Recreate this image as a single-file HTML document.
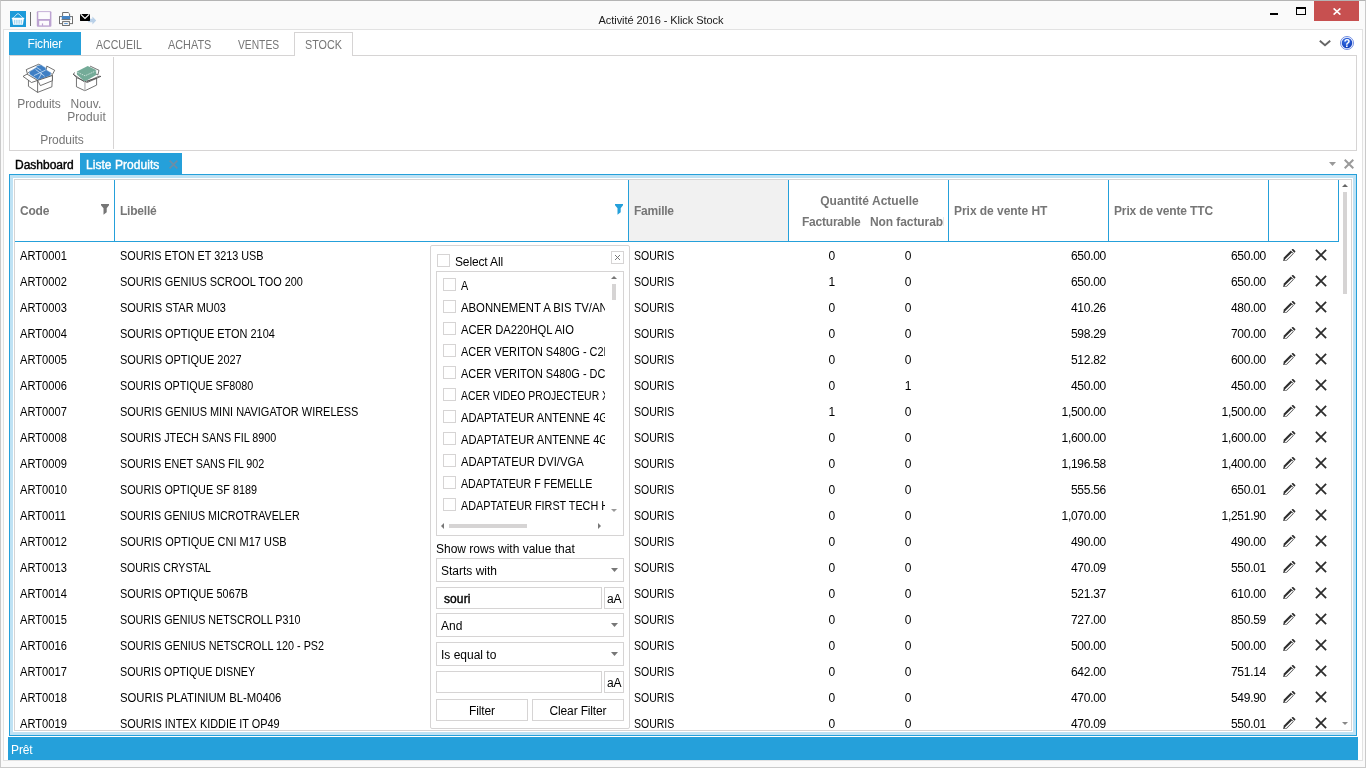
<!DOCTYPE html>
<html><head><meta charset="utf-8"><title>Klick Stock</title>
<style>
*{box-sizing:border-box;margin:0;padding:0}
html,body{width:1366px;height:768px;overflow:hidden;background:#fafafa}
body{font-family:"Liberation Sans",sans-serif;font-size:12px;color:#000;position:relative}
.abs,div,span,svg,i{position:absolute}
.t{white-space:nowrap;line-height:16px;height:16px}
#wrap{left:0;top:0;width:1366px;height:768px;will-change:transform}
/* window */
#win{left:0;top:0;width:1366px;height:768px;border:1px solid #cacaca;border-top-color:#b4b4b4;background:#fafafa}
#client{left:3px;top:29px;width:1360px;height:732px;border:1px solid #e2e2e2;background:#fff}
/* title */
#title{left:598px;top:12px;width:126px;text-align:center;font-size:11px;letter-spacing:-0.06px;color:#1a1a1a}
/* ribbon */
#tabline{left:9px;top:55px;width:1348px;height:1px;background:#d6d4d4}
#rbox{left:9px;top:55px;width:1348px;height:96px;border:1px solid #d6d4d4;background:#fff}
#fichier{left:9px;top:32px;width:72px;height:23px;background:#25a0da}
.rt{top:37px;font-size:12px;color:#767676;transform:scaleX(.9);transform-origin:0 50%}
#stocktab{left:294px;top:32px;width:59px;height:24px;border:1px solid #d6d4d4;border-bottom:none;background:#fff}
#gsep{left:113px;top:57px;width:1px;height:92px;background:#d6d4d4}
.rl{font-size:12px;color:#767676;letter-spacing:-0.05px;text-align:center}
/* doc tabs */
#ltab{left:80px;top:153px;width:102px;height:21px;background:#25a0da}
/* panel */
#panel{left:9px;top:174px;width:1348px;height:562px;border:1px solid #25a0da;background:#bfe2f4}
#pinner{left:13px;top:178px;width:1340px;height:554px;background:#fff}
#grid{left:14px;top:179px;width:1338px;height:552px;border:1px solid #d6d4d4;background:#fff;overflow:hidden}
/* header */
.hsep{top:180px;width:1px;height:61px;background:#25a0da}
#hline{left:15px;top:241px;width:1324px;height:1px;background:#25a0da}
.h{font-weight:bold;color:#767676;font-size:12px;letter-spacing:-0.22px}
/* rows */
.row{left:15px;width:1324px;height:26px}
.c{top:6px;line-height:16px;height:16px;white-space:nowrap;font-size:12px}
.code,.lib,.fam{transform:scaleX(.912);transform-origin:0 50%}
.fam{transform:scaleX(.875)}
.code{transform:scaleX(.928)}
.q1,.q2,.ht,.ttc{letter-spacing:-0.28px}
.code{left:5px}.lib{left:105px}.fam{left:619px}
.q1{left:776.6px;width:80px;text-align:center}
.q2{left:853px;width:80px;text-align:center}
.ht{right:233px;text-align:right}
.ttc{right:73px;text-align:right}
.pen{left:1267.6px;top:7px;width:12.5px;height:12.5px;overflow:visible}
.del{left:1300px;top:7px;width:12px;height:12px}
/* status */
#status{left:8px;top:737px;width:1350px;height:23px;background:#25a0da}
/* popup */
#pop{left:430px;top:245px;width:200px;height:484px;border:1px solid #d6d4d4;border-radius:2px;background:#fff}
#lbox{left:436px;top:271px;width:188px;height:265px;border:1px solid #d6d4d4;background:#fff;overflow:hidden}
.cb{width:13px;height:13px;border:1px solid #d6d4d4;background:#fff}
.li{left:436px;width:169px;height:22px;overflow:hidden}
.li .cb{left:7px;top:4px}
.li span{left:25px;top:4px;line-height:16px;white-space:nowrap;font-size:12px;transform:scaleX(.9);transform-origin:0 50%}
.box{border:1px solid #d6d4d4;background:#fff}
.pt{font-size:12px;letter-spacing:0;white-space:nowrap;line-height:16px}
</style></head><body>
<div id="wrap">
<div id="win"></div>
<div id="client"></div>

<!-- title bar icons -->
<svg style="left:10px;top:11px;width:16px;height:16px" viewBox="0 0 16 16"><rect width="16" height="16" fill="#1c9ad9"/><path d="M3.2 7 L7.1 3 Q8 2.2 8.9 3 L12.8 7" stroke="#cfeaf8" stroke-width="0.9" fill="none"/><path d="M1.8 6.8 H14.2 V8 H13.8 L12.9 13.8 H3.1 L2.2 8 H1.8 Z" fill="#fff"/><path d="M4.4 8.8 V12.8 M6.2 8.8 V12.8 M8 8.8 V12.8 M9.8 8.8 V12.8 M11.6 8.8 V12.8" stroke="#7cc4ea" stroke-width="0.8"/></svg>
<div style="left:30px;top:12px;width:1px;height:14px;background:#6c6c6c"></div>
<svg style="left:36px;top:11px;width:16px;height:16px" viewBox="0 0 16 16"><rect x="0.8" y="0.3" width="14.6" height="15.4" rx="1" fill="#bca3d1"/><rect x="2.3" y="1.1" width="11.6" height="6.9" fill="#fcfbfd"/><rect x="3.2" y="9.8" width="9.8" height="4.6" fill="#fcfbfd"/><rect x="5.9" y="12.4" width="1.2" height="2.4" fill="#bca3d1"/></svg>
<svg style="left:59px;top:12px;width:14px;height:14px" viewBox="0 0 14 14"><path d="M3.6 4.4 V0.5 H9.2 L10.6 1.9 V4.4" fill="#fff" stroke="#6e6e6e"/><rect x="0.5" y="4.6" width="13" height="7" fill="#fff" stroke="#6e6e6e"/><rect x="2.8" y="4" width="8.4" height="3.4" fill="#4585c5"/><path d="M2.6 7.6 H11.4" stroke="#6e6e6e"/><rect x="3.6" y="9.6" width="6.8" height="3.9" fill="#fff" stroke="#6e6e6e"/><path d="M5.2 11.6 H8.8" stroke="#3f82c6" stroke-width="0.9"/></svg>
<svg style="left:80px;top:13px;width:18px;height:12px" viewBox="0 0 18 12"><path d="M8.2 5.8 H12.4 V3.6 L16.2 7.5 L12.4 11.4 V9.2 H8.2 Z" fill="#b9d0e8"/><rect x="0" y="1" width="10" height="7" rx="0.4" fill="#000"/><path d="M0.8 1.4 L5 5.4 L9.2 1.4" stroke="#fff" stroke-width="1.25" fill="none"/></svg>
<div id="title" class="t">Activité 2016 - Klick Stock</div>

<!-- window controls -->
<div style="left:1270px;top:13px;width:8px;height:2px;background:#000"></div>
<div style="left:1296px;top:7px;width:10px;height:8px;border:1px solid #000;border-top-width:2px"></div>
<div style="left:1314px;top:1px;width:45px;height:20px;background:#c75050"></div>
<svg style="left:1333px;top:8px;width:8px;height:7px" viewBox="0 0 8 7"><path d="M0.6 0.4 L7.4 6.6 M7.4 0.4 L0.6 6.6" stroke="#fff" stroke-width="1.6"/></svg>

<!-- ribbon -->
<div id="rbox"></div>
<div id="fichier"></div>
<div class="t" style="left:27.5px;top:36px;font-size:12px;color:#fff;letter-spacing:-0.2px">Fichier</div>
<div id="stocktab"></div>
<div class="t rt" style="left:96px;transform:scaleX(.88)">ACCUEIL</div>
<div class="t rt" style="left:168px;transform:scaleX(.907)">ACHATS</div>
<div class="t rt" style="left:238px;transform:scaleX(.856)">VENTES</div>
<div class="t rt" style="left:304.5px">STOCK</div>
<svg style="left:1319px;top:40px;width:12px;height:7px" viewBox="0 0 12 7"><path d="M0.8 0.7 L6 5.3 L11.2 0.7" stroke="#666" stroke-width="1.9" fill="none"/></svg>
<svg style="left:1340px;top:36px;width:14px;height:14px" viewBox="0 0 15 15"><defs><radialGradient id="hg" cx="0.4" cy="0.3" r="0.8"><stop offset="0" stop-color="#3b73e8"/><stop offset="1" stop-color="#0c38b4"/></radialGradient></defs><circle cx="7.5" cy="7.5" r="7" fill="#f2f5ff" stroke="#5f7fdc" stroke-width="0.9"/><circle cx="7.5" cy="7.5" r="5.6" fill="url(#hg)"/><text x="7.5" y="11.3" font-family="Liberation Sans" font-weight="bold" font-size="11.5" fill="#fff" text-anchor="middle">?</text></svg>

<!-- ribbon buttons -->
<svg style="left:22px;top:63px;width:34px;height:31px" viewBox="22 63 34 31"><g fill="#fff" stroke="#444" stroke-width="0.75" stroke-linejoin="round"><path d="M27.3 73.6 L26.3 69.6 L38.8 64.2 L42 66 L29.5 71.8 Z"/><path d="M46.8 66.1 L54.7 70.3 L52.4 74.5 L46.3 70.5 Z"/><path d="M28.45 80.4 V86.3 L37.6 92.4 L51.9 86.8 L52.4 75.5 L37.6 80.4 Z"/><path d="M37.6 80.4 V92.4" fill="none"/></g><path d="M29.2 72 L36.2 67.6 L37 65.7 L41 64.9 L45.6 67.7 L46.3 70 L51 72.7 L50.5 75.6 L38.3 80.1 L29.6 74.3 Z" fill="#3f7fc4" stroke="#a9c8ea" stroke-width="0.5"/><path d="M35.5 69.4 L44.6 76.2 M45.6 70.1 L33.9 75.6 M36.6 67.4 L41.2 70.4 M41.8 72.9 L38.6 78.6" stroke="#cfe1f4" stroke-width="0.8" fill="none"/><g fill="#fff" stroke="#444" stroke-width="0.75" stroke-linejoin="round"><path d="M23.05 76.4 L27 74.1 L37.6 80.4 L31.5 82.5 Z"/><path d="M37.6 80.4 L40.4 85.6 L52.4 80.7 L52.4 75.5 Z"/></g></svg>
<svg style="left:72px;top:65px;width:30px;height:27px" viewBox="72 65 30 27"><g fill="#fff" stroke="#444" stroke-width="0.75" stroke-linejoin="round"><path d="M90.1 66.1 L99 70.3 L97.8 75 L88 70"/><path d="M76.45 77.6 V86.76 L84.9 90.75 L96.6 85.1 V78.3 L84.9 81.4 Z"/></g><rect x="84" y="81.8" width="1.8" height="8.6" fill="#cdcdcd"/><path d="M76.9 71.5 L87.7 66.1 L96.2 70.1 V75 L85.8 81.1 L84 81.1 L76.9 74.6 Z" fill="#74ab98"/><path d="M77.4 72.3 L85.1 75.8 L95.6 71" stroke="#e4f1ec" stroke-width="0.75" fill="none" stroke-dasharray="1.5 0.9"/><g fill="none" stroke="#444" stroke-width="0.75" stroke-linejoin="round"><path d="M76.45 77.6 L73.2 74.1 L75 72.5 M73.2 74.1 L84 81.6 M84.9 81.4 L87.25 82.5 L100.9 76.4 L99 76.2 L86.8 81.8"/></g></svg>
<div class="t rl" style="left:9px;top:96px;width:60px">Produits</div>
<div class="t rl" style="left:56px;top:96px;width:60px;letter-spacing:0.1px">Nouv.</div>
<div class="t rl" style="left:56.5px;top:109px;width:60px;letter-spacing:0.1px">Produit</div>
<div class="t rl" style="left:32px;top:132px;width:60px">Produits</div>
<div id="gsep"></div>

<!-- document tabs -->
<div class="t" style="left:15px;top:157px;font-size:12px;letter-spacing:0px;color:#000;-webkit-text-stroke:0.4px #000">Dashboard</div>
<div id="ltab"></div>
<div class="t" style="left:86px;top:157px;font-size:12px;color:#fff;letter-spacing:0.05px;-webkit-text-stroke:0.4px #fff">Liste Produits</div>
<svg style="left:169px;top:160px;width:9px;height:9px" viewBox="0 0 9 9"><path d="M0.6 0.6 L8.4 8.4 M8.4 0.6 L0.6 8.4" stroke="#6b8ea6" stroke-width="1.8"/></svg>
<svg style="left:1329px;top:162px;width:7px;height:4px" viewBox="0 0 7 4"><path d="M0 0 H7 L3.5 4 Z" fill="#999"/></svg>
<svg style="left:1344px;top:159px;width:10px;height:10px" viewBox="0 0 10 10"><path d="M0.7 0.7 L9.3 9.3 M9.3 0.7 L0.7 9.3" stroke="#9a9a9a" stroke-width="2"/></svg>

<!-- panel + grid -->
<div id="panel"></div><div id="pinner"></div><div id="grid"></div>
<div style="left:629px;top:180px;width:159px;height:61px;background:#f1f1f1"></div>
<div class="hsep" style="left:114px"></div><div class="hsep" style="left:628px"></div><div class="hsep" style="left:788px"></div><div class="hsep" style="left:948px"></div><div class="hsep" style="left:1108px"></div><div class="hsep" style="left:1268px"></div><div class="hsep" style="left:1338px"></div>
<div id="hline"></div>
<div class="t h" style="left:20px;top:203px">Code</div>
<div class="t h" style="left:120px;top:203px">Libellé</div>
<div class="t h" style="left:634px;top:203px">Famille</div>
<div class="t h" style="left:789px;top:193px;width:161px;text-align:center;letter-spacing:0.02px">Quantité Actuelle</div>
<div class="t h" style="left:802px;top:214px">Facturable</div>
<div class="t h" style="left:870px;top:214px;width:74px;overflow:hidden;letter-spacing:-0.08px">Non facturable</div>
<div class="t h" style="left:954px;top:203px;letter-spacing:-0.04px">Prix de vente HT</div>
<div class="t h" style="left:1114px;top:203px;letter-spacing:-0.14px">Prix de vente TTC</div>
<svg style="left:101px;top:204px;width:8px;height:11px" viewBox="0 0 8 11"><path d="M0 0 H8 V1.2 L5.7 4.2 V8.2 L2.5 10.8 V4.2 L0 1.2 Z" fill="#767676"/></svg>
<svg style="left:615px;top:204px;width:8px;height:11px" viewBox="0 0 8 11"><path d="M0 0 H8 V1.2 L5.7 4.2 V8.2 L2.5 10.8 V4.2 L0 1.2 Z" fill="#25a0da"/></svg>

<div class="row" style="top:242px"><span class="c code">ART0001</span><span class="c lib" style="transform:scaleX(0.903)">SOURIS ETON ET 3213 USB</span><span class="c fam">SOURIS</span><span class="c q1">0</span><span class="c q2">0</span><span class="c ht">650.00</span><span class="c ttc">650.00</span><svg class="pen" viewBox="0 0 13 13"><path d="M0.2 12.4 L0.9 8.8 L8.1 1.6 L11.2 4.7 L4 11.9 Z" fill="#2d2d2d"/><path d="M2.4 10.5 L9.3 3.6 L10.4 4.7 L3.6 11.5 L1.3 11.9 Z" fill="#fff"/><path d="M8.9 0.9 L9.8 0 Q10.2 -0.3 10.6 0.1 L12.7 2.2 Q13.1 2.6 12.7 3 L11.8 3.9 Z" fill="#2d2d2d"/></svg><svg class="del" viewBox="0 0 12 12"><path d="M0.9 0.9 L11.1 11.1 M11.1 0.9 L0.9 11.1" stroke="#2d2d2d" stroke-width="1.8" fill="none"/></svg></div>
<div class="row" style="top:268px"><span class="c code">ART0002</span><span class="c lib" style="transform:scaleX(0.909)">SOURIS GENIUS SCROOL TOO 200</span><span class="c fam">SOURIS</span><span class="c q1">1</span><span class="c q2">0</span><span class="c ht">650.00</span><span class="c ttc">650.00</span><svg class="pen" viewBox="0 0 13 13"><path d="M0.2 12.4 L0.9 8.8 L8.1 1.6 L11.2 4.7 L4 11.9 Z" fill="#2d2d2d"/><path d="M2.4 10.5 L9.3 3.6 L10.4 4.7 L3.6 11.5 L1.3 11.9 Z" fill="#fff"/><path d="M8.9 0.9 L9.8 0 Q10.2 -0.3 10.6 0.1 L12.7 2.2 Q13.1 2.6 12.7 3 L11.8 3.9 Z" fill="#2d2d2d"/></svg><svg class="del" viewBox="0 0 12 12"><path d="M0.9 0.9 L11.1 11.1 M11.1 0.9 L0.9 11.1" stroke="#2d2d2d" stroke-width="1.8" fill="none"/></svg></div>
<div class="row" style="top:294px"><span class="c code">ART0003</span><span class="c lib" style="transform:scaleX(0.915)">SOURIS STAR MU03</span><span class="c fam">SOURIS</span><span class="c q1">0</span><span class="c q2">0</span><span class="c ht">410.26</span><span class="c ttc">480.00</span><svg class="pen" viewBox="0 0 13 13"><path d="M0.2 12.4 L0.9 8.8 L8.1 1.6 L11.2 4.7 L4 11.9 Z" fill="#2d2d2d"/><path d="M2.4 10.5 L9.3 3.6 L10.4 4.7 L3.6 11.5 L1.3 11.9 Z" fill="#fff"/><path d="M8.9 0.9 L9.8 0 Q10.2 -0.3 10.6 0.1 L12.7 2.2 Q13.1 2.6 12.7 3 L11.8 3.9 Z" fill="#2d2d2d"/></svg><svg class="del" viewBox="0 0 12 12"><path d="M0.9 0.9 L11.1 11.1 M11.1 0.9 L0.9 11.1" stroke="#2d2d2d" stroke-width="1.8" fill="none"/></svg></div>
<div class="row" style="top:320px"><span class="c code">ART0004</span><span class="c lib" style="transform:scaleX(0.912)">SOURIS OPTIQUE ETON 2104</span><span class="c fam">SOURIS</span><span class="c q1">0</span><span class="c q2">0</span><span class="c ht">598.29</span><span class="c ttc">700.00</span><svg class="pen" viewBox="0 0 13 13"><path d="M0.2 12.4 L0.9 8.8 L8.1 1.6 L11.2 4.7 L4 11.9 Z" fill="#2d2d2d"/><path d="M2.4 10.5 L9.3 3.6 L10.4 4.7 L3.6 11.5 L1.3 11.9 Z" fill="#fff"/><path d="M8.9 0.9 L9.8 0 Q10.2 -0.3 10.6 0.1 L12.7 2.2 Q13.1 2.6 12.7 3 L11.8 3.9 Z" fill="#2d2d2d"/></svg><svg class="del" viewBox="0 0 12 12"><path d="M0.9 0.9 L11.1 11.1 M11.1 0.9 L0.9 11.1" stroke="#2d2d2d" stroke-width="1.8" fill="none"/></svg></div>
<div class="row" style="top:346px"><span class="c code">ART0005</span><span class="c lib" style="transform:scaleX(0.912)">SOURIS OPTIQUE 2027</span><span class="c fam">SOURIS</span><span class="c q1">0</span><span class="c q2">0</span><span class="c ht">512.82</span><span class="c ttc">600.00</span><svg class="pen" viewBox="0 0 13 13"><path d="M0.2 12.4 L0.9 8.8 L8.1 1.6 L11.2 4.7 L4 11.9 Z" fill="#2d2d2d"/><path d="M2.4 10.5 L9.3 3.6 L10.4 4.7 L3.6 11.5 L1.3 11.9 Z" fill="#fff"/><path d="M8.9 0.9 L9.8 0 Q10.2 -0.3 10.6 0.1 L12.7 2.2 Q13.1 2.6 12.7 3 L11.8 3.9 Z" fill="#2d2d2d"/></svg><svg class="del" viewBox="0 0 12 12"><path d="M0.9 0.9 L11.1 11.1 M11.1 0.9 L0.9 11.1" stroke="#2d2d2d" stroke-width="1.8" fill="none"/></svg></div>
<div class="row" style="top:372px"><span class="c code">ART0006</span><span class="c lib" style="transform:scaleX(0.896)">SOURIS OPTIQUE SF8080</span><span class="c fam">SOURIS</span><span class="c q1">0</span><span class="c q2">1</span><span class="c ht">450.00</span><span class="c ttc">450.00</span><svg class="pen" viewBox="0 0 13 13"><path d="M0.2 12.4 L0.9 8.8 L8.1 1.6 L11.2 4.7 L4 11.9 Z" fill="#2d2d2d"/><path d="M2.4 10.5 L9.3 3.6 L10.4 4.7 L3.6 11.5 L1.3 11.9 Z" fill="#fff"/><path d="M8.9 0.9 L9.8 0 Q10.2 -0.3 10.6 0.1 L12.7 2.2 Q13.1 2.6 12.7 3 L11.8 3.9 Z" fill="#2d2d2d"/></svg><svg class="del" viewBox="0 0 12 12"><path d="M0.9 0.9 L11.1 11.1 M11.1 0.9 L0.9 11.1" stroke="#2d2d2d" stroke-width="1.8" fill="none"/></svg></div>
<div class="row" style="top:398px"><span class="c code">ART0007</span><span class="c lib" style="transform:scaleX(0.912)">SOURIS GENIUS MINI NAVIGATOR WIRELESS</span><span class="c fam">SOURIS</span><span class="c q1">1</span><span class="c q2">0</span><span class="c ht">1,500.00</span><span class="c ttc">1,500.00</span><svg class="pen" viewBox="0 0 13 13"><path d="M0.2 12.4 L0.9 8.8 L8.1 1.6 L11.2 4.7 L4 11.9 Z" fill="#2d2d2d"/><path d="M2.4 10.5 L9.3 3.6 L10.4 4.7 L3.6 11.5 L1.3 11.9 Z" fill="#fff"/><path d="M8.9 0.9 L9.8 0 Q10.2 -0.3 10.6 0.1 L12.7 2.2 Q13.1 2.6 12.7 3 L11.8 3.9 Z" fill="#2d2d2d"/></svg><svg class="del" viewBox="0 0 12 12"><path d="M0.9 0.9 L11.1 11.1 M11.1 0.9 L0.9 11.1" stroke="#2d2d2d" stroke-width="1.8" fill="none"/></svg></div>
<div class="row" style="top:424px"><span class="c code">ART0008</span><span class="c lib" style="transform:scaleX(0.896)">SOURIS JTECH SANS FIL 8900</span><span class="c fam">SOURIS</span><span class="c q1">0</span><span class="c q2">0</span><span class="c ht">1,600.00</span><span class="c ttc">1,600.00</span><svg class="pen" viewBox="0 0 13 13"><path d="M0.2 12.4 L0.9 8.8 L8.1 1.6 L11.2 4.7 L4 11.9 Z" fill="#2d2d2d"/><path d="M2.4 10.5 L9.3 3.6 L10.4 4.7 L3.6 11.5 L1.3 11.9 Z" fill="#fff"/><path d="M8.9 0.9 L9.8 0 Q10.2 -0.3 10.6 0.1 L12.7 2.2 Q13.1 2.6 12.7 3 L11.8 3.9 Z" fill="#2d2d2d"/></svg><svg class="del" viewBox="0 0 12 12"><path d="M0.9 0.9 L11.1 11.1 M11.1 0.9 L0.9 11.1" stroke="#2d2d2d" stroke-width="1.8" fill="none"/></svg></div>
<div class="row" style="top:450px"><span class="c code">ART0009</span><span class="c lib" style="transform:scaleX(0.897)">SOURIS ENET SANS FIL 902</span><span class="c fam">SOURIS</span><span class="c q1">0</span><span class="c q2">0</span><span class="c ht">1,196.58</span><span class="c ttc">1,400.00</span><svg class="pen" viewBox="0 0 13 13"><path d="M0.2 12.4 L0.9 8.8 L8.1 1.6 L11.2 4.7 L4 11.9 Z" fill="#2d2d2d"/><path d="M2.4 10.5 L9.3 3.6 L10.4 4.7 L3.6 11.5 L1.3 11.9 Z" fill="#fff"/><path d="M8.9 0.9 L9.8 0 Q10.2 -0.3 10.6 0.1 L12.7 2.2 Q13.1 2.6 12.7 3 L11.8 3.9 Z" fill="#2d2d2d"/></svg><svg class="del" viewBox="0 0 12 12"><path d="M0.9 0.9 L11.1 11.1 M11.1 0.9 L0.9 11.1" stroke="#2d2d2d" stroke-width="1.8" fill="none"/></svg></div>
<div class="row" style="top:476px"><span class="c code">ART0010</span><span class="c lib" style="transform:scaleX(0.901)">SOURIS OPTIQUE SF 8189</span><span class="c fam">SOURIS</span><span class="c q1">0</span><span class="c q2">0</span><span class="c ht">555.56</span><span class="c ttc">650.01</span><svg class="pen" viewBox="0 0 13 13"><path d="M0.2 12.4 L0.9 8.8 L8.1 1.6 L11.2 4.7 L4 11.9 Z" fill="#2d2d2d"/><path d="M2.4 10.5 L9.3 3.6 L10.4 4.7 L3.6 11.5 L1.3 11.9 Z" fill="#fff"/><path d="M8.9 0.9 L9.8 0 Q10.2 -0.3 10.6 0.1 L12.7 2.2 Q13.1 2.6 12.7 3 L11.8 3.9 Z" fill="#2d2d2d"/></svg><svg class="del" viewBox="0 0 12 12"><path d="M0.9 0.9 L11.1 11.1 M11.1 0.9 L0.9 11.1" stroke="#2d2d2d" stroke-width="1.8" fill="none"/></svg></div>
<div class="row" style="top:502px"><span class="c code">ART0011</span><span class="c lib" style="transform:scaleX(0.893)">SOURIS GENIUS MICROTRAVELER</span><span class="c fam">SOURIS</span><span class="c q1">0</span><span class="c q2">0</span><span class="c ht">1,070.00</span><span class="c ttc">1,251.90</span><svg class="pen" viewBox="0 0 13 13"><path d="M0.2 12.4 L0.9 8.8 L8.1 1.6 L11.2 4.7 L4 11.9 Z" fill="#2d2d2d"/><path d="M2.4 10.5 L9.3 3.6 L10.4 4.7 L3.6 11.5 L1.3 11.9 Z" fill="#fff"/><path d="M8.9 0.9 L9.8 0 Q10.2 -0.3 10.6 0.1 L12.7 2.2 Q13.1 2.6 12.7 3 L11.8 3.9 Z" fill="#2d2d2d"/></svg><svg class="del" viewBox="0 0 12 12"><path d="M0.9 0.9 L11.1 11.1 M11.1 0.9 L0.9 11.1" stroke="#2d2d2d" stroke-width="1.8" fill="none"/></svg></div>
<div class="row" style="top:528px"><span class="c code">ART0012</span><span class="c lib" style="transform:scaleX(0.915)">SOURIS OPTIQUE CNI M17 USB</span><span class="c fam">SOURIS</span><span class="c q1">0</span><span class="c q2">0</span><span class="c ht">490.00</span><span class="c ttc">490.00</span><svg class="pen" viewBox="0 0 13 13"><path d="M0.2 12.4 L0.9 8.8 L8.1 1.6 L11.2 4.7 L4 11.9 Z" fill="#2d2d2d"/><path d="M2.4 10.5 L9.3 3.6 L10.4 4.7 L3.6 11.5 L1.3 11.9 Z" fill="#fff"/><path d="M8.9 0.9 L9.8 0 Q10.2 -0.3 10.6 0.1 L12.7 2.2 Q13.1 2.6 12.7 3 L11.8 3.9 Z" fill="#2d2d2d"/></svg><svg class="del" viewBox="0 0 12 12"><path d="M0.9 0.9 L11.1 11.1 M11.1 0.9 L0.9 11.1" stroke="#2d2d2d" stroke-width="1.8" fill="none"/></svg></div>
<div class="row" style="top:554px"><span class="c code">ART0013</span><span class="c lib" style="transform:scaleX(0.878)">SOURIS CRYSTAL</span><span class="c fam">SOURIS</span><span class="c q1">0</span><span class="c q2">0</span><span class="c ht">470.09</span><span class="c ttc">550.01</span><svg class="pen" viewBox="0 0 13 13"><path d="M0.2 12.4 L0.9 8.8 L8.1 1.6 L11.2 4.7 L4 11.9 Z" fill="#2d2d2d"/><path d="M2.4 10.5 L9.3 3.6 L10.4 4.7 L3.6 11.5 L1.3 11.9 Z" fill="#fff"/><path d="M8.9 0.9 L9.8 0 Q10.2 -0.3 10.6 0.1 L12.7 2.2 Q13.1 2.6 12.7 3 L11.8 3.9 Z" fill="#2d2d2d"/></svg><svg class="del" viewBox="0 0 12 12"><path d="M0.9 0.9 L11.1 11.1 M11.1 0.9 L0.9 11.1" stroke="#2d2d2d" stroke-width="1.8" fill="none"/></svg></div>
<div class="row" style="top:580px"><span class="c code">ART0014</span><span class="c lib" style="transform:scaleX(0.905)">SOURIS OPTIQUE 5067B</span><span class="c fam">SOURIS</span><span class="c q1">0</span><span class="c q2">0</span><span class="c ht">521.37</span><span class="c ttc">610.00</span><svg class="pen" viewBox="0 0 13 13"><path d="M0.2 12.4 L0.9 8.8 L8.1 1.6 L11.2 4.7 L4 11.9 Z" fill="#2d2d2d"/><path d="M2.4 10.5 L9.3 3.6 L10.4 4.7 L3.6 11.5 L1.3 11.9 Z" fill="#fff"/><path d="M8.9 0.9 L9.8 0 Q10.2 -0.3 10.6 0.1 L12.7 2.2 Q13.1 2.6 12.7 3 L11.8 3.9 Z" fill="#2d2d2d"/></svg><svg class="del" viewBox="0 0 12 12"><path d="M0.9 0.9 L11.1 11.1 M11.1 0.9 L0.9 11.1" stroke="#2d2d2d" stroke-width="1.8" fill="none"/></svg></div>
<div class="row" style="top:606px"><span class="c code">ART0015</span><span class="c lib" style="transform:scaleX(0.895)">SOURIS GENIUS NETSCROLL P310</span><span class="c fam">SOURIS</span><span class="c q1">0</span><span class="c q2">0</span><span class="c ht">727.00</span><span class="c ttc">850.59</span><svg class="pen" viewBox="0 0 13 13"><path d="M0.2 12.4 L0.9 8.8 L8.1 1.6 L11.2 4.7 L4 11.9 Z" fill="#2d2d2d"/><path d="M2.4 10.5 L9.3 3.6 L10.4 4.7 L3.6 11.5 L1.3 11.9 Z" fill="#fff"/><path d="M8.9 0.9 L9.8 0 Q10.2 -0.3 10.6 0.1 L12.7 2.2 Q13.1 2.6 12.7 3 L11.8 3.9 Z" fill="#2d2d2d"/></svg><svg class="del" viewBox="0 0 12 12"><path d="M0.9 0.9 L11.1 11.1 M11.1 0.9 L0.9 11.1" stroke="#2d2d2d" stroke-width="1.8" fill="none"/></svg></div>
<div class="row" style="top:632px"><span class="c code">ART0016</span><span class="c lib" style="transform:scaleX(0.899)">SOURIS GENIUS NETSCROLL 120 - PS2</span><span class="c fam">SOURIS</span><span class="c q1">0</span><span class="c q2">0</span><span class="c ht">500.00</span><span class="c ttc">500.00</span><svg class="pen" viewBox="0 0 13 13"><path d="M0.2 12.4 L0.9 8.8 L8.1 1.6 L11.2 4.7 L4 11.9 Z" fill="#2d2d2d"/><path d="M2.4 10.5 L9.3 3.6 L10.4 4.7 L3.6 11.5 L1.3 11.9 Z" fill="#fff"/><path d="M8.9 0.9 L9.8 0 Q10.2 -0.3 10.6 0.1 L12.7 2.2 Q13.1 2.6 12.7 3 L11.8 3.9 Z" fill="#2d2d2d"/></svg><svg class="del" viewBox="0 0 12 12"><path d="M0.9 0.9 L11.1 11.1 M11.1 0.9 L0.9 11.1" stroke="#2d2d2d" stroke-width="1.8" fill="none"/></svg></div>
<div class="row" style="top:658px"><span class="c code">ART0017</span><span class="c lib" style="transform:scaleX(0.893)">SOURIS OPTIQUE DISNEY</span><span class="c fam">SOURIS</span><span class="c q1">0</span><span class="c q2">0</span><span class="c ht">642.00</span><span class="c ttc">751.14</span><svg class="pen" viewBox="0 0 13 13"><path d="M0.2 12.4 L0.9 8.8 L8.1 1.6 L11.2 4.7 L4 11.9 Z" fill="#2d2d2d"/><path d="M2.4 10.5 L9.3 3.6 L10.4 4.7 L3.6 11.5 L1.3 11.9 Z" fill="#fff"/><path d="M8.9 0.9 L9.8 0 Q10.2 -0.3 10.6 0.1 L12.7 2.2 Q13.1 2.6 12.7 3 L11.8 3.9 Z" fill="#2d2d2d"/></svg><svg class="del" viewBox="0 0 12 12"><path d="M0.9 0.9 L11.1 11.1 M11.1 0.9 L0.9 11.1" stroke="#2d2d2d" stroke-width="1.8" fill="none"/></svg></div>
<div class="row" style="top:684px"><span class="c code">ART0018</span><span class="c lib" style="transform:scaleX(0.943)">SOURIS PLATINIUM BL-M0406</span><span class="c fam">SOURIS</span><span class="c q1">0</span><span class="c q2">0</span><span class="c ht">470.00</span><span class="c ttc">549.90</span><svg class="pen" viewBox="0 0 13 13"><path d="M0.2 12.4 L0.9 8.8 L8.1 1.6 L11.2 4.7 L4 11.9 Z" fill="#2d2d2d"/><path d="M2.4 10.5 L9.3 3.6 L10.4 4.7 L3.6 11.5 L1.3 11.9 Z" fill="#fff"/><path d="M8.9 0.9 L9.8 0 Q10.2 -0.3 10.6 0.1 L12.7 2.2 Q13.1 2.6 12.7 3 L11.8 3.9 Z" fill="#2d2d2d"/></svg><svg class="del" viewBox="0 0 12 12"><path d="M0.9 0.9 L11.1 11.1 M11.1 0.9 L0.9 11.1" stroke="#2d2d2d" stroke-width="1.8" fill="none"/></svg></div>
<div class="row" style="top:710px"><span class="c code">ART0019</span><span class="c lib" style="transform:scaleX(0.908)">SOURIS INTEX KIDDIE IT OP49</span><span class="c fam">SOURIS</span><span class="c q1">0</span><span class="c q2">0</span><span class="c ht">470.09</span><span class="c ttc">550.01</span><svg class="pen" viewBox="0 0 13 13"><path d="M0.2 12.4 L0.9 8.8 L8.1 1.6 L11.2 4.7 L4 11.9 Z" fill="#2d2d2d"/><path d="M2.4 10.5 L9.3 3.6 L10.4 4.7 L3.6 11.5 L1.3 11.9 Z" fill="#fff"/><path d="M8.9 0.9 L9.8 0 Q10.2 -0.3 10.6 0.1 L12.7 2.2 Q13.1 2.6 12.7 3 L11.8 3.9 Z" fill="#2d2d2d"/></svg><svg class="del" viewBox="0 0 12 12"><path d="M0.9 0.9 L11.1 11.1 M11.1 0.9 L0.9 11.1" stroke="#2d2d2d" stroke-width="1.8" fill="none"/></svg></div>

<!-- grid v-scrollbar -->
<svg style="left:1342px;top:184px;width:6px;height:3px" viewBox="0 0 6 3"><path d="M0 3 L3 0 L6 3 Z" fill="#666"/></svg>
<div style="left:1343px;top:192px;width:4px;height:102px;background:#d6d4d4"></div>
<svg style="left:1342px;top:722px;width:6px;height:3px" viewBox="0 0 6 3"><path d="M0 0 H6 L3 3 Z" fill="#888"/></svg>

<!-- popup -->
<div id="pop"></div>
<i class="cb" style="left:437px;top:254px"></i>
<div class="t pt" style="left:455px;top:254px;letter-spacing:-0.13px">Select All</div>
<div class="box" style="left:611px;top:251px;width:13px;height:13px"></div>
<svg style="left:614px;top:254px;width:7px;height:7px" viewBox="0 0 7 7"><path d="M1 1 L6 6 M6 1 L1 6" stroke="#6a6a6a" stroke-width="0.9"/></svg>
<div id="lbox"></div>
<div class="li" style="top:274px"><i class="cb"></i><span style="transform:scaleX(0.9)">A</span></div>
<div class="li" style="top:296px"><i class="cb"></i><span style="transform:scaleX(0.943)">ABONNEMENT A BIS TV/ANTENNE</span></div>
<div class="li" style="top:318px"><i class="cb"></i><span style="transform:scaleX(0.934)">ACER DA220HQL AIO</span></div>
<div class="li" style="top:340px"><i class="cb"></i><span style="transform:scaleX(0.911)">ACER VERITON S480G - C2D</span></div>
<div class="li" style="top:362px"><i class="cb"></i><span style="transform:scaleX(0.911)">ACER VERITON S480G - DC</span></div>
<div class="li" style="top:384px"><i class="cb"></i><span style="transform:scaleX(0.871)">ACER VIDEO PROJECTEUR X1</span></div>
<div class="li" style="top:406px"><i class="cb"></i><span style="transform:scaleX(0.929)">ADAPTATEUR ANTENNE 4G</span></div>
<div class="li" style="top:428px"><i class="cb"></i><span style="transform:scaleX(0.929)">ADAPTATEUR ANTENNE 4G</span></div>
<div class="li" style="top:450px"><i class="cb"></i><span style="transform:scaleX(0.937)">ADAPTATEUR DVI/VGA</span></div>
<div class="li" style="top:472px"><i class="cb"></i><span style="transform:scaleX(0.89)">ADAPTATEUR F FEMELLE</span></div>
<div class="li" style="top:494px"><i class="cb"></i><span style="transform:scaleX(0.9)">ADAPTATEUR FIRST TECH HDMI</span></div>
<svg style="left:611px;top:276px;width:6px;height:3px" viewBox="0 0 6 3"><path d="M0 3 L3 0 L6 3 Z" fill="#777"/></svg>
<div style="left:612px;top:284px;width:4px;height:16px;background:#d6d4d4"></div>
<svg style="left:611px;top:509px;width:6px;height:3px" viewBox="0 0 6 3"><path d="M0 0 H6 L3 3 Z" fill="#999"/></svg>
<svg style="left:441px;top:523px;width:3px;height:6px" viewBox="0 0 3 6"><path d="M3 0 V6 L0 3 Z" fill="#777"/></svg>
<div style="left:449px;top:524px;width:78px;height:4px;background:#d6d4d4"></div>
<svg style="left:598px;top:523px;width:3px;height:6px" viewBox="0 0 3 6"><path d="M0 0 V6 L3 3 Z" fill="#777"/></svg>

<div class="t pt" style="left:436px;top:541px">Show rows with value that</div>
<div class="box" style="left:436px;top:558px;width:188px;height:24px"></div>
<div class="t pt" style="left:441px;top:563px">Starts with</div>
<svg class="dd" style="left:611px;top:568px;width:7px;height:4px" viewBox="0 0 7 4"><path d="M0 0 H7 L3.5 4 Z" fill="#777"/></svg>
<div class="box" style="left:436px;top:587px;width:166px;height:22px"></div>
<div class="t pt" style="left:444px;top:591px;-webkit-text-stroke:0.4px #000;letter-spacing:0.1px">souri</div>
<div class="box" style="left:604px;top:587px;width:20px;height:22px"></div>
<div class="t pt" style="left:607px;top:591px;letter-spacing:-0.1px">aA</div>
<div class="box" style="left:436px;top:613px;width:188px;height:24px"></div>
<div class="t pt" style="left:441px;top:618px">And</div>
<svg class="dd" style="left:611px;top:623px;width:7px;height:4px" viewBox="0 0 7 4"><path d="M0 0 H7 L3.5 4 Z" fill="#777"/></svg>
<div class="box" style="left:436px;top:642px;width:188px;height:24px"></div>
<div class="t pt" style="left:441px;top:647px">Is equal to</div>
<svg class="dd" style="left:611px;top:652px;width:7px;height:4px" viewBox="0 0 7 4"><path d="M0 0 H7 L3.5 4 Z" fill="#777"/></svg>
<div class="box" style="left:436px;top:671px;width:166px;height:22px"></div>
<div class="box" style="left:604px;top:671px;width:20px;height:22px"></div>
<div class="t pt" style="left:607px;top:675px;letter-spacing:-0.1px">aA</div>
<div class="box" style="left:436px;top:699px;width:92px;height:22px"></div>
<div class="t pt" style="left:436px;top:703px;width:92px;text-align:center;letter-spacing:-0.15px">Filter</div>
<div class="box" style="left:532px;top:699px;width:92px;height:22px"></div>
<div class="t pt" style="left:532px;top:703px;width:92px;text-align:center;letter-spacing:-0.15px">Clear Filter</div>

<!-- status -->
<div id="status"></div>
<div class="t" style="left:11px;top:742px;color:#fff;font-size:12px;letter-spacing:-0.1px">Prêt</div>
</div>
</body></html>
